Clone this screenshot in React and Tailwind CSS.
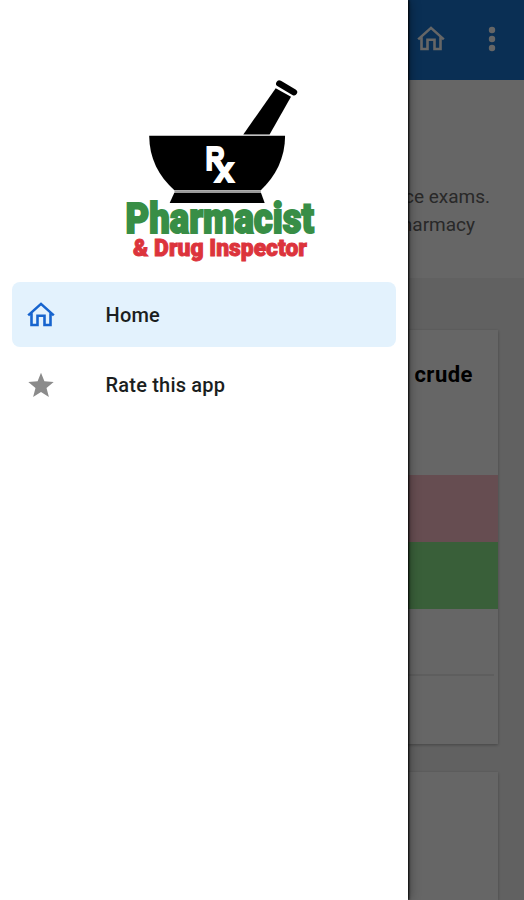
import React from 'react';

function HomeIcon({ className }) {
  return (
    <svg viewBox="0 0 28 26" className={`w-7 h-[26px] ${className}`} fill="none" stroke="currentColor" strokeWidth="2.6">
      <path d="M1.200 13.400 14 1.900l12.800 11.500M4.500 11.200v11.800h6v-9.200h7v9.200h6V11.200" />
    </svg>
  );
}

function Logo() {
  return (
    <svg
      viewBox="120 76 200 188"
      className="w-[200px] h-[188px] ml-[120px] mt-[76px] shrink-0"
      fontFamily="Roboto, sans-serif"
      fontWeight="900"
    >
      <path d="M243.300 134.500 275.700 88.200 291 96.800 269.600 134.500z" />
      <path d="M279.300 83.600 294 92.200" stroke="#000" strokeWidth="6.400" strokeLinecap="round" />
      <path d="M149.200 135.800h135.900c0 22-9.500 41-24.300 54.400h-86.400c-15.700-13.400-25.200-32.400-25.200-54.400z" />
      <path d="M174.500 191.500h86.300" stroke="#999" strokeWidth="1.800" />
      <path d="M174.300 192.800h86.700l3.700 10.200h-95z" />
      <g fill="#fff" stroke="#fff" strokeWidth="1.800" fontFamily="Liberation Sans, Arial, sans-serif" fontWeight="700">
        <text transform="translate(205.600 169.800) scale(.8 1)" fontSize="33.500">R</text>
        <text transform="translate(214.600 181.800) scale(.98 1)" fontSize="36">x</text>
      </g>
      <text x="125.500" y="232.600" fontSize="42" fill="#388e46" stroke="#388e46" strokeWidth="1.900" textLength="188.500" lengthAdjust="spacingAndGlyphs">
        Pharmacist
      </text>
      <text x="133" y="256.200" fontSize="24.500" fill="#dc343c" stroke="#dc343c" strokeWidth="1" textLength="174" lengthAdjust="spacingAndGlyphs">
        &amp; Drug Inspector
      </text>
    </svg>
  );
}

function Screen() {
  return (
    <div className="flex flex-col h-full bg-[#f3f3f3]">
      <header className="flex items-center justify-end h-[80px] pb-[2px] pr-[24px] shrink-0 bg-[#1976d2] text-white">
        <HomeIcon className="mr-[39px]" />
        <svg viewBox="0 0 16 26" className="w-4 h-[26px]" fill="currentColor">
          <circle cx="8" cy="4" r="3.200" />
          <circle cx="8" cy="13" r="3.200" />
          <circle cx="8" cy="22" r="3.200" />
        </svg>
      </header>

      <section className="h-[198px] shrink-0 bg-white pt-[103px] text-[19px] leading-[28px] text-[#666]">
        <p className="text-right pr-[34px]">practice exams.</p>
        <p className="text-right pr-[49px]">pharmacy</p>
      </section>

      <section className="flex flex-col mt-[52px] h-[414px] mx-[26px] shrink-0 bg-white shadow-[0_1px_3px_rgba(0,0,0,0.3)]">
        <h2 className="h-[145px] pt-[29px] pr-[25px] text-right text-[22px] leading-[32px] tracking-[0.5px] font-bold">crude</h2>
        <div className="h-[67px] bg-[#ffc0cb]" />
        <div className="h-[67px] bg-[#90ee90]" />
        <div className="h-[67px] mx-1 border-b-2 border-[#ebebeb]" />
      </section>

      <section className="flex-1 mt-[28px] mx-[26px] bg-white shadow-[0_1px_3px_rgba(0,0,0,0.3)]" />
    </div>
  );
}

function Drawer() {
  return (
    <aside className="absolute inset-y-0 left-0 flex flex-col w-[408px] bg-white shadow-[1px_0_2px_#000,2px_0_10px_rgba(0,0,0,0.35)]">
      <Logo />
      <nav className="flex flex-col gap-[5px] mt-[18px] px-3 text-[20px] tracking-[0.2px] font-medium text-[#1b1e20]">
        <a className="flex items-center h-[65px] pl-[15px] rounded-lg bg-[#e3f2fd]">
          <HomeIcon className="text-[#1764ce]" />
          <span className="ml-[50.5px]">Home</span>
        </a>
        <a className="flex items-center h-[65px] pl-[15px] rounded-lg">
          <svg viewBox="0 0 28 26" className="w-7 h-[26px] text-[#8b8b8b]" fill="currentColor">
            <path d="M14 .8 17.400 9.300 26.700 10 19.500 15.900 21.900 24.900 14 20 6.100 24.900 8.500 15.900 1.300 10 10.600 9.300z" />
          </svg>
          <span className="ml-[50.5px]">Rate this app</span>
        </a>
      </nav>
    </aside>
  );
}

export default function App() {
  return (
    <div className="relative w-[524px] h-[900px] overflow-hidden font-[Roboto,sans-serif]">
      <Screen />
      <div className="absolute inset-0 bg-black/60" />
      <Drawer />
    </div>
  );
}
